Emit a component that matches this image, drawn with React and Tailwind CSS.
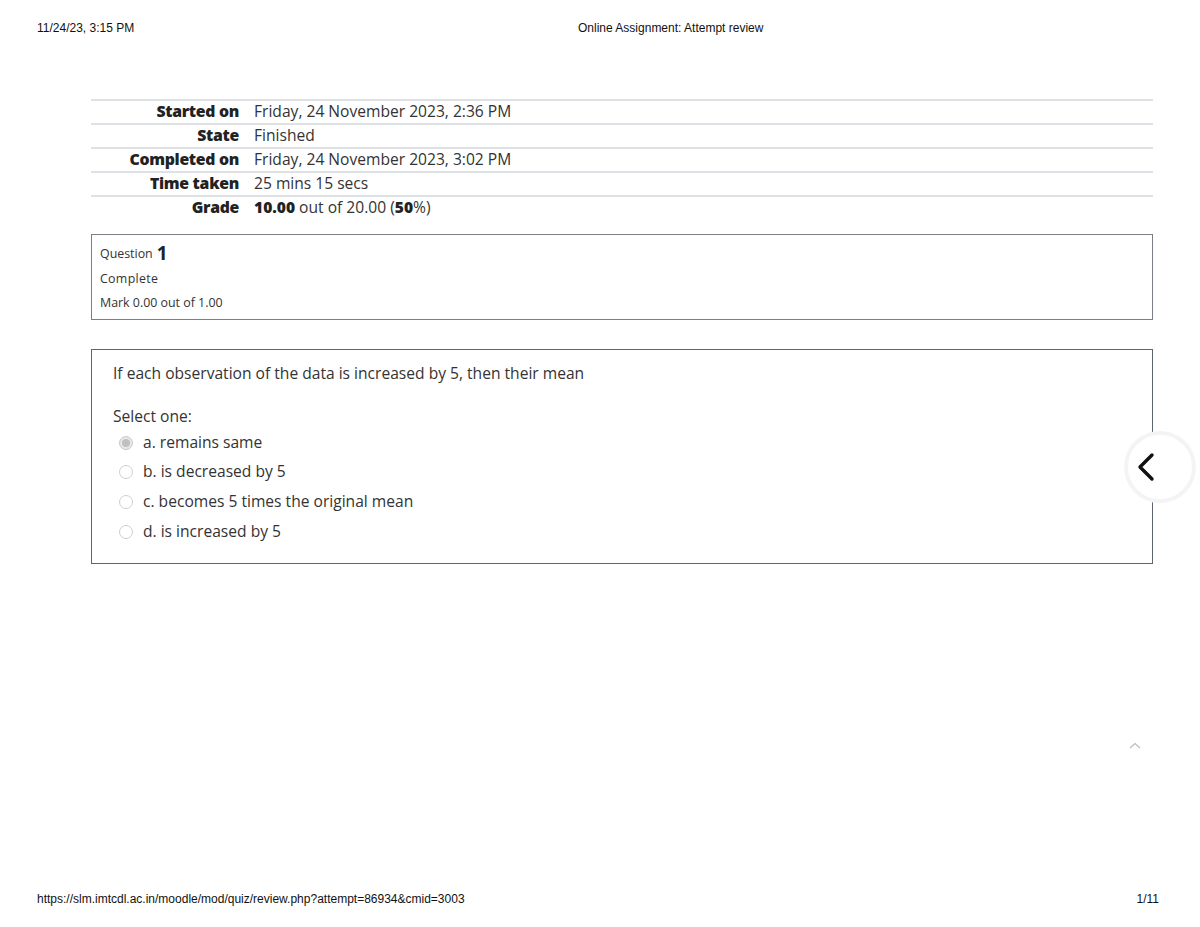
import React from "react";

const rows = [
  ["Started on", <>Friday, 24 November 2023, 2:36 PM</>],
  ["State", <>Finished</>],
  ["Completed on", <>Friday, 24 November 2023, 3:02 PM</>],
  ["Time taken", <>25 mins 15 secs</>],
  ["Grade", <><b className="font-extrabold text-[#222]">10.00</b> out of 20.00 (<b className="font-extrabold text-[#222]">50</b>%)</>],
];

const options = [
  ["a. remains same", true],
  ["b. is decreased by 5", false],
  ["c. becomes 5 times the original mean", false],
  ["d. is increased by 5", false],
];

export default function App() {
  return (
    <div className="relative w-[1200px] h-[927px] bg-white overflow-hidden text-[#111]">
      {/* print header */}
      <div className="flex items-center h-[56px] pl-[37px] text-[12px] leading-none" style={{ fontFamily: '"Liberation Sans", Arial, sans-serif' }}>
        <div className="w-[541px]">11/24/23, 3:15 PM</div>
        <div>Online Assignment: Attempt review</div>
      </div>

      <div className="pl-[91px] pr-[47px] text-[#333]" style={{ fontFamily: '"Open Sans", "Noto Sans", sans-serif' }}>
        {/* summary table */}
        <div className="mt-[43px]">
          {rows.map(([k, v], i) => (
            <div key={i} className="flex items-center h-[24px] border-t-2 border-[#dee2e6] text-[15.6px]">
              <div className="w-[148px] text-right font-extrabold tracking-[-0.3px] text-[#222] text-[15.8px]">{k}</div>
              <div className="pl-[15px]">{v}</div>
            </div>
          ))}
        </div>

        {/* question info */}
        <div className="mt-[15px] h-[86px] border border-[#7a7f85] pl-[8px] pt-[6px] text-[12.4px]">
          <div className="flex items-center h-[24px]">
            <span className="mt-[2px]">Question</span>
            <span className="ml-[4px] text-[19px] font-bold text-[#222] leading-none">1</span>
          </div>
          <div className="mt-[2px] h-[24px] leading-[24px] tracking-[0.3px]">Complete</div>
          <div className="h-[24px] leading-[24px]">Mark 0.00 out of 1.00</div>
        </div>

        {/* question content */}
        <div className="mt-[29px] h-[215px] border border-[#5d6670] pl-[21px] pt-[12px] text-[15.6px]">
          <div className="h-[22px]">If each observation of the data is increased by 5, then their mean</div>
          <div className="mt-[21px] h-[22px]">Select one:</div>
          <div className="mt-[1px]">
            {options.map(([t, sel], i) => (
              <div key={i} className="flex items-center h-[30px] first:h-[29px]">
                <span
                  className={
                    "ml-[6px] w-[14px] h-[14px] rounded-full border " +
                    (sel ? "border-[#c8c8c8] bg-[#e8e8e8] flex items-center justify-center" : "border-[#cfcfcf] bg-white")
                  }
                >
                  {sel && <span className="w-[8px] h-[8px] rounded-full bg-[#c0c0c0]" />}
                </span>
                <span className="ml-[10px]">{t}</span>
              </div>
            ))}
          </div>
        </div>
      </div>

      {/* right drawer toggle */}
      <div className="absolute left-[1124px] top-[431px] w-[72px] h-[72px] rounded-full border-[4px] border-[#f4f4f4] bg-white flex items-center pl-[9px]">
        <svg width="20" height="30" viewBox="0 0 20 30">
          <path d="M15 3 L3 15 L15 27" fill="none" stroke="#111" strokeWidth="3.4" strokeLinecap="round" strokeLinejoin="round" />
        </svg>
      </div>

      {/* back to top chevron */}
      <svg className="absolute left-[1129px] top-[742px]" width="12" height="8" viewBox="0 0 12 8">
        <path d="M1 6 L6 1.5 L11 6" fill="none" stroke="#bdbdbd" strokeWidth="1.3" />
      </svg>

      {/* print footer */}
      <div className="absolute left-0 right-0 top-[893px] flex items-center px-[37px] text-[12px] leading-none" style={{ fontFamily: '"Liberation Sans", Arial, sans-serif' }}>
        <div className="flex-1">https://slm.imtcdl.ac.in/moodle/mod/quiz/review.php?attempt=86934&amp;cmid=3003</div>
        <div className="pr-[4px]">1/11</div>
      </div>
    </div>
  );
}
